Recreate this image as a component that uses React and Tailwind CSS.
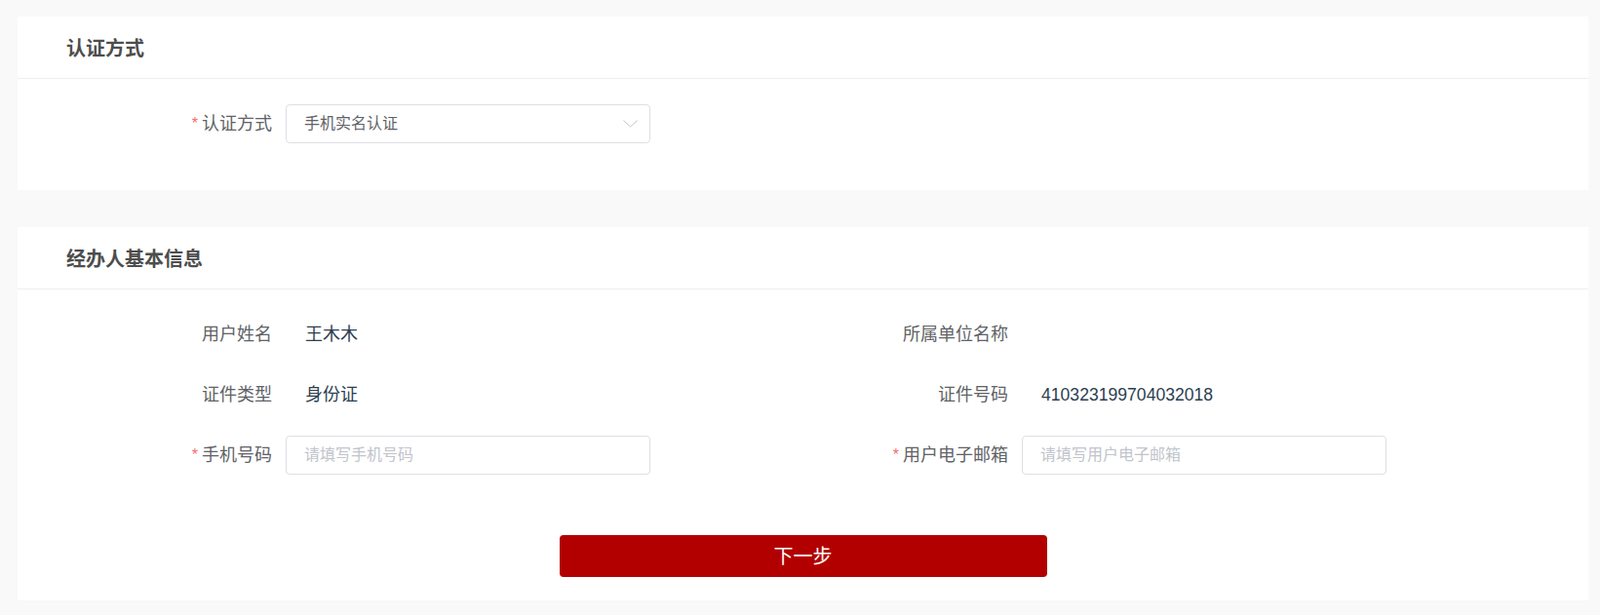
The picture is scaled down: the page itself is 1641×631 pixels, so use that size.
import React from "react";

const font = { fontFamily: '"Liberation Sans", "Noto Sans CJK SC", sans-serif' };

function Label({ children, required }) {
  return (
    <div className="w-[180px] shrink-0 pr-[14px] flex items-center justify-end h-[40px] text-[18px] text-[#606266] leading-[40px]">
      {required && <span className="text-[#f56c6c] mr-[4px] text-[16px]">*</span>}
      {children}
    </div>
  );
}

function Value({ children, num }) {
  return (
    <div className={num ? "pl-[20px] h-[40px] flex items-center text-[17.6px] text-[#2c3e50]" : "pl-[20px] h-[40px] flex items-center text-[18px] text-[#2c3e50]"}>
      {children}
    </div>
  );
}

function TextInput({ placeholder }) {
  return (
    <input
      className="w-[374px] h-[40px] border border-[#dcdfe6] rounded-[4px] pl-[18px] text-[16px] text-[#606266] placeholder:text-[#c0c4cc] outline-none bg-white"
      placeholder={placeholder}
      style={font}
    />
  );
}

function Card({ title, children }) {
  return (
    <div className="bg-white">
      <div className="pt-[19px] pb-[16px] pl-[50px] border-b border-[#efefef] leading-[28px] text-[20px] font-bold text-[#4d4d4d]">
        {title}
      </div>
      {children}
    </div>
  );
}

export default function App() {
  return (
    <div className="min-h-[631px] bg-[#f9f9f9] pt-[17px] pl-[18px] pr-[12px] pb-[14px]" style={font}>
      <Card title="认证方式">
        <div className="pt-[26px] pb-[48px] pl-[95px]">
          <div className="flex">
            <Label required>认证方式</Label>
            <div className="w-[374px] h-[40px] border border-[#dcdfe6] rounded-[4px] pl-[18px] pr-[12px] flex items-center justify-between text-[16px] text-[#606266]">
              <span>手机实名认证</span>
              <svg width="15" height="8" viewBox="0 0 15 8" fill="none">
                <polyline points="0.5,0.5 7.5,7 14.5,0.5" stroke="#c0c4cc" strokeWidth="1" />
              </svg>
            </div>
          </div>
        </div>
      </Card>

      <div className="h-[38px]" />

      <Card title="经办人基本信息">
        <div className="pt-[26px] pb-[24px]">
          <div className="pl-[95px] flex flex-col gap-[22px]">
            <div className="grid grid-cols-[755px_755px]">
              <div className="flex">
                <Label>用户姓名</Label>
                <Value>王木木</Value>
              </div>
              <div className="flex">
                <Label>所属单位名称</Label>
                <Value></Value>
              </div>
            </div>
            <div className="grid grid-cols-[755px_755px]">
              <div className="flex">
                <Label>证件类型</Label>
                <Value>身份证</Value>
              </div>
              <div className="flex">
                <Label>证件号码</Label>
                <Value num>410323199704032018</Value>
              </div>
            </div>
            <div className="grid grid-cols-[755px_755px]">
              <div className="flex">
                <Label required>手机号码</Label>
                <TextInput placeholder="请填写手机号码" />
              </div>
              <div className="flex">
                <Label required>用户电子邮箱</Label>
                <TextInput placeholder="请填写用户电子邮箱" />
              </div>
            </div>
          </div>
          <div className="flex justify-center mt-[62px]">
            <button className="w-[500px] h-[43px] bg-[#b20000] rounded-[4px] text-white text-[20px]" style={font}>
              下一步
            </button>
          </div>
        </div>
      </Card>
    </div>
  );
}
